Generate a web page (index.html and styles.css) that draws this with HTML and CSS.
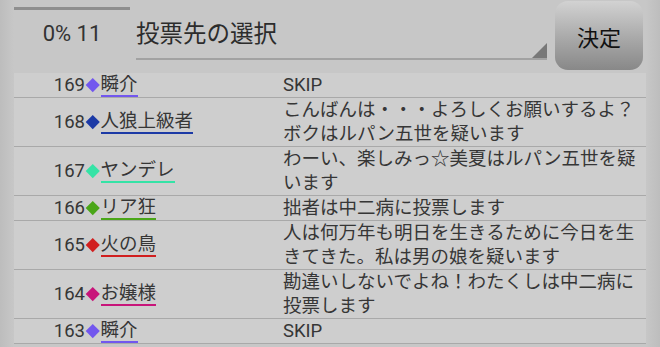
FILE: index.html
```html
<!DOCTYPE html>
<html>
<head>
  <title>投票</title>
  <link rel="stylesheet" href="styles.css">
</head>
<body>
<div id="screen">
  <div class="head">
    <div class="timer">
      <div class="bar"></div>
      <div class="count">0% 11</div>
    </div>
    <div class="picker">
      <span class="picker-label">投票先の選択</span>
      <span class="corner"></span>
    </div>
    <div class="decide">決定</div>
  </div>

  <div class="log">
    <div class="row">
      <div class="who"><span class="num">169</span><span class="mark c-purple"></span><span class="name c-purple">瞬介</span></div>
      <div class="msg">SKIP</div>
    </div>
    <div class="row">
      <div class="who"><span class="num">168</span><span class="mark c-navy"></span><span class="name c-navy">人狼上級者</span></div>
      <div class="msg">こんばんは・・・よろしくお願いするよ？ボクはルパン五世を疑います</div>
    </div>
    <div class="row">
      <div class="who"><span class="num">167</span><span class="mark c-mint"></span><span class="name c-mint">ヤンデレ</span></div>
      <div class="msg">わーい、楽しみっ☆美夏はルパン五世を疑います</div>
    </div>
    <div class="row">
      <div class="who"><span class="num">166</span><span class="mark c-green"></span><span class="name c-green">リア狂</span></div>
      <div class="msg">拙者は中二病に投票します</div>
    </div>
    <div class="row">
      <div class="who"><span class="num">165</span><span class="mark c-red"></span><span class="name c-red">火の鳥</span></div>
      <div class="msg">人は何万年も明日を生きるために今日を生きてきた。私は男の娘を疑います</div>
    </div>
    <div class="row">
      <div class="who"><span class="num">164</span><span class="mark c-pink"></span><span class="name c-pink">お嬢様</span></div>
      <div class="msg">勘違いしないでよね！わたくしは中二病に投票します</div>
    </div>
    <div class="row">
      <div class="who"><span class="num">163</span><span class="mark c-purple"></span><span class="name c-purple">瞬介</span></div>
      <div class="msg">SKIP</div>
    </div>
  </div>
</div>
</body>
</html>
```

FILE: styles.css
```css
body {
  margin: 0;
  background-color: #c6c6c6;
  font-family: Roboto, "Noto Sans CJK JP", sans-serif;
  color: #363636;
  overflow: hidden;
}
#screen {
  width: 660px;
  height: 347px;
  padding: 0 14px;
  box-sizing: border-box;
  background: linear-gradient(to right, #bdbdbd 0, #c7c7c7 14px, #c7c7c7 646px, #bdbdbd 660px);
}

/* header */
.head {
  display: flex;
  height: 73px;
}
.timer {
  width: 116px;
  padding-top: 7px;
}
.bar {
  height: 3px;
  background-color: #8f8f8f;
}
.count {
  text-align: center;
  font-size: 22px;
  margin-top: 11px;
  color: #333;
}
.picker {
  position: relative;
  width: 411px;
  height: 60px;
  margin-left: 6px;
  border-bottom: 2px solid #a2a2a2;
  box-sizing: border-box;
}
.picker-label {
  display: block;
  font-size: 23.5px;
  margin-top: 15px;
  color: #2c2c2c;
}
.corner {
  position: absolute;
  right: 0;
  bottom: 0;
  width: 0;
  height: 0;
  border-left: 15px solid transparent;
  border-bottom: 15px solid #787878;
}
.decide {
  width: 88px;
  height: 69px;
  margin: 1px 0 0 8px;
  border-radius: 13px;
  background: linear-gradient(#d2d2d2, #a8a8a8 55%, #888);
  color: #111;
  font-size: 22px;
  display: flex;
  align-items: center;
  justify-content: center;
}

/* log table */
.log {
  background-color: #cecece;
}
.row {
  display: flex;
  align-items: center;
  border-bottom: 1px solid #a9a9a9;
}
.who {
  width: 269px;
  display: flex;
  align-items: center;
  flex: none;
}
.num {
  width: 71px;
  text-align: right;
  font-size: 18.5px;
}
.mark {
  width: 9.5px;
  height: 9.5px;
  margin: 0 3px 0 3px;
  transform: rotate(45deg);
}
.name {
  font-size: 18.5px;
  line-height: 22px;
  border-bottom: 2px solid;
}
.msg {
  font-size: 18.5px;
  line-height: 24px;
  width: 360px;
}

.mark.c-purple { background-color: #7257ee; }
.mark.c-navy   { background-color: #1c3aa6; }
.mark.c-mint   { background-color: #35e3a6; }
.mark.c-green  { background-color: #4aa618; }
.mark.c-red    { background-color: #d11f1f; }
.mark.c-pink   { background-color: #c8157a; }
.name.c-purple { border-color: #7257ee; }
.name.c-navy   { border-color: #1c3aa6; }
.name.c-mint   { border-color: #35e3a6; }
.name.c-green  { border-color: #4aa618; }
.name.c-red    { border-color: #d11f1f; }
.name.c-pink   { border-color: #c8157a; }
```
